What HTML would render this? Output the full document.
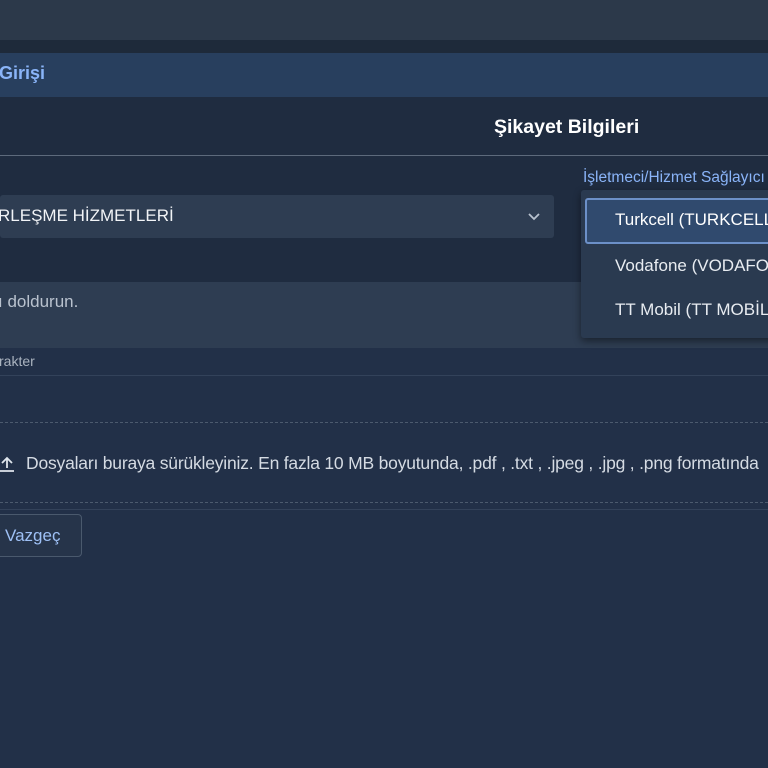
<!DOCTYPE html>
<html><head><meta charset="utf-8"><style>
body{margin:0;width:768px;height:768px;overflow:hidden;background:#223048;font-family:"Liberation Sans",sans-serif;position:relative}
div,span{position:absolute;box-sizing:border-box}
.t{white-space:nowrap}
</style></head><body>
<div style="left:0;top:0;width:768px;height:40px;background:#2c394a"></div>
<div style="left:0;top:40px;width:768px;height:13px;background:#1e2a3a"></div>
<div style="left:0;top:53px;width:768px;height:44px;background:#283f5e"></div>
<div class="t" style="left:-1px;top:63px;font-size:18px;font-weight:bold;color:#8ab4f8">Girişi</div>
<div style="left:0;top:97px;width:768px;height:58px;background:#1f2c40"></div>
<div class="t" style="left:494px;top:116px;font-size:19.5px;font-weight:bold;color:#fff">Şikayet Bilgileri</div>
<div style="left:0;top:155px;width:768px;height:1px;background:#5d6a7c"></div>
<div style="left:0;top:156px;width:768px;height:126px;background:#1f2c40"></div>
<div class="t" style="left:583px;top:169px;font-size:15.5px;color:#8ab4f8">İşletmeci/Hizmet Sağlayıcı</div>
<div style="left:0;top:195px;width:554px;height:43px;background:#2e3d52;border-radius:3px"></div>
<div class="t" style="left:-2px;top:206px;font-size:17px;color:#f2f4f7">RLEŞME HİZMETLERİ</div>
<svg style="position:absolute;left:527px;top:211px" width="14" height="12"><path d="M2 3l5 5 5-5" stroke="#b8c2cf" stroke-width="1.8" fill="none"/></svg>
<div style="left:0;top:282px;width:768px;height:66px;background:#2e3d52"></div>
<div class="t" style="left:-2px;top:292px;font-size:17px;color:#b9c2ce">ı doldurun.</div>
<div class="t" style="left:-1px;top:353px;font-size:14px;color:#aab3bf">rakter</div>
<div style="left:0;top:375px;width:768px;height:1px;background:#33425a"></div>
<div style="left:0;top:422px;width:768px;border-top:1px dashed #4c5a6e"></div>
<svg style="position:absolute;left:-2px;top:454px" width="18" height="20"><path d="M9 14V4M4 9l5-5 5 5M2 17h14" stroke="#dfe5ec" stroke-width="1.8" fill="none"/></svg>
<div class="t" style="left:26px;top:453px;font-size:17.5px;color:#d5dbe3;letter-spacing:-0.2px">Dosyaları buraya sürükleyiniz. En fazla 10 MB boyutunda, .pdf , .txt , .jpeg , .jpg , .png formatında</div>
<div style="left:0;top:502px;width:768px;border-top:1px dashed #4c5a6e"></div>
<div style="left:0;top:509px;width:768px;height:1px;background:#33425a"></div>
<div style="left:-10px;top:514px;width:92px;height:43px;border:1px solid #4a596d;border-radius:4px;background:#26344a"></div>
<div class="t" style="left:5px;top:526px;font-size:17px;color:#9ec0f5">Vazgeç</div>
<div style="left:581px;top:190px;width:200px;height:148px;background:#2a3a50;box-shadow:0 3px 8px rgba(0,0,0,.45);border-radius:3px"></div>
<div style="left:585px;top:198px;width:200px;height:46px;background:#304a6e;border:2px solid #6c90c8;border-radius:3px"></div>
<div class="t" style="left:615px;top:210px;font-size:17px;color:#fff">Turkcell (TURKCELL)</div>
<div class="t" style="left:615px;top:256px;font-size:17px;color:#e8ecf1">Vodafone (VODAFONE)</div>
<div class="t" style="left:615px;top:300px;font-size:17px;color:#e8ecf1">TT Mobil (TT MOBİL)</div>
</body></html>
